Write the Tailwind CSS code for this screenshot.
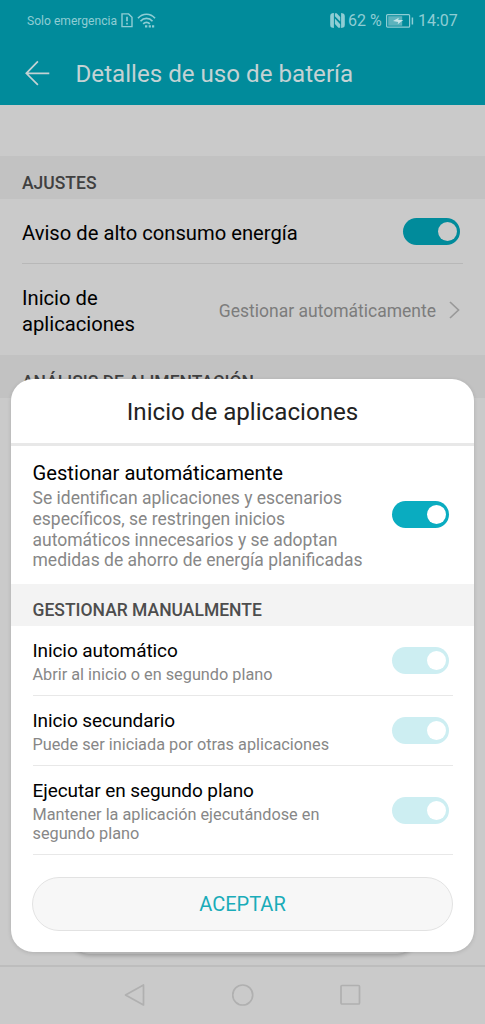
<!DOCTYPE html>
<html lang="es">
<head>
<meta charset="utf-8">
<title>Detalles de uso de batería</title>
<script src="https://cdn.jsdelivr.net/npm/@tailwindcss/browser@4"></script>
</head>
<body class="relative h-[1024px] w-[485px] overflow-hidden bg-[#cacaca] font-[Roboto,sans-serif] text-black">
<div class="flex h-full flex-col">
  <header class="h-[105px] bg-[#018b9b]">
    <div class="flex h-[41px] items-center justify-between pl-[27px] pr-[27px] text-[#8fcdd4]">
      <div class="flex items-center">
        <span class="w-[90px] whitespace-nowrap text-[12.1px] leading-4">Solo emergencia</span>
        <svg class="ml-[4px]" width="12" height="15" viewBox="0 0 12 15" fill="none" stroke="currentColor" stroke-width="1.4"><path d="M1 .9h6.6L11 4.3v9.3H1z"/><path d="M6 3.8v4.4M6 9.8v1.6" stroke-width="1.700"/></svg>
        <svg class="ml-[4px]" width="19" height="16" viewBox="0 0 19 16" fill="none" stroke="currentColor" stroke-width="1.7"><path d="M1 5.3c4.6-5.4 12.400-5.400 17 0M3.500 8.200c3.300-3.700 8.700-3.700 12 0M6.200 10.800c1.900-2 4.700-2 6.600 0"/><path d="M8 13.300h2.300M11.700 13.300h2.200M15 13.300h2.200" stroke-width="2.300"/></svg>
      </div>
      <div class="flex items-center">
        <svg width="15" height="15" viewBox="0 0 15 15"><path fill="currentColor" d="M2 .3 3.900 0v15L1.600 14.600Q.2 14 .2 12V3Q.2 1 2 .3zM11.100 0l2.200.4Q14.800 1 14.800 3v9q0 2-1.500 2.600l-2.200.4z"/><path fill="currentColor" d="M4.900.3h1.800L10.200 4v4.600L4.900 3.200zM4.900 5.600l5.300 5.600v3.500H8.400L4.900 11z"/></svg>
        <span class="ml-[3px] w-[34px] whitespace-nowrap text-[16px] leading-5">62 %</span>
        <svg class="ml-[4px]" width="28" height="14" viewBox="0 0 28 14"><rect x=".6" y=".6" width="23" height="12.600" rx="1" fill="none" stroke="currentColor" stroke-width="1.200"/><path d="M2.200 2.200h14v9.500h-14z" fill="#5cb3bd"/><path d="M26.400 3.500v7" stroke="currentColor" stroke-width="1.500"/><path d="M7 6.900 12.800 3.700 12.200 6H17.300L11.700 10.300 12.200 8z" fill="#c5e5e8"/></svg>
        <span class="ml-[4px] w-[40px] whitespace-nowrap text-[16px] leading-5">14:07</span>
      </div>
    </div>
    <div class="flex h-[64px] items-center pl-[25px] text-[#c4d2d4]">
      <svg class="-mt-px" width="25" height="26" viewBox="0 0 25 26" fill="none" stroke="currentColor" stroke-width="1.700"><path d="M24.300 13.300H1.300M12.900 1.300 1.300 13.300l11.600 11.600"/></svg>
      <h1 class="ml-[25.500px] whitespace-nowrap pt-[2px] text-[24.150px] leading-8">Detalles de uso de batería</h1>
    </div>
  </header>
  <main class="flex grow flex-col">
    <div class="h-[51px]"></div>
    <h2 class="flex h-[43px] items-center bg-[#c2c2c2] pl-[22px] pt-[11px] text-[17.500px] font-medium text-[#404040]">AJUSTES</h2>
    <div class="mx-[22px] flex h-[65px] items-center justify-between border-b border-[#b8b8b8]">
      <span class="whitespace-nowrap pt-[3px] text-[20.200px] leading-6">Aviso de alto consumo energía</span>
      <span class="mr-[3px] flex h-[27px] w-[57px] items-center justify-end rounded-full bg-[#018b9b] pr-[3px]"><i class="size-[19px] rounded-full bg-[#cacaca]"></i></span>
    </div>
    <div class="mx-[22px] flex h-[91px] items-center">
      <span class="grow pt-[2px] text-[20.200px] leading-[26px]">Inicio de<br>aplicaciones</span>
      <span class="whitespace-nowrap pt-[3px] text-[17.500px] text-[#7c7c7c]">Gestionar automáticamente</span>
      <svg class="ml-[13px] mr-[3px]" width="11" height="18" viewBox="0 0 11 18" fill="none" stroke="#999" stroke-width="1.700"><path d="M1 1l8.500 8L1 17"/></svg>
    </div>
    <h2 class="flex h-[43px] items-center bg-[#c2c2c2] pl-[22px] pt-[12px] text-[17.500px] font-medium text-[#404040]">ANÁLISIS DE ALIMENTACIÓN</h2>
    <div class="grow"></div>
    <div class="mx-auto h-[44px] w-[350px] -mb-[44px] -translate-y-[55px] rounded-[22px] border border-[#bebebe] bg-[#c4c4c4] shadow-[0_2px_4px_#0003]"></div>
  </main>
  <nav class="flex h-[59px] items-center justify-center gap-[86px] border-t-2 border-[#bdbdbd] bg-[#cacaca] pb-px text-[#b0b0b0]">
    <svg width="22" height="24" viewBox="0 0 22 24" fill="none" stroke="currentColor" stroke-width="1.700" stroke-linejoin="round"><path d="M19.500 2v20L1.500 12z"/></svg>
    <svg width="22" height="24" viewBox="0 0 22 24" fill="none" stroke="currentColor" stroke-width="1.700"><circle cx="10.700" cy="12" r="10"/></svg>
    <svg width="22" height="24" viewBox="0 0 22 24" fill="none" stroke="currentColor" stroke-width="1.700"><rect x="1" y="2.500" width="18.500" height="18.500" rx="1"/></svg>
  </nav>
</div>

<section class="absolute left-[11px] top-[379px] flex h-[573px] w-[463px] flex-col overflow-hidden rounded-[22px] bg-white shadow-[0_1px_4px_#0002]">
  <h2 class="flex h-[67px] items-center justify-center whitespace-nowrap border-b-[3px] border-[#e8e8e8] pt-[2px] text-[24.150px] text-[#222]">Inicio de aplicaciones</h2>
  <div class="flex h-[138px] items-center justify-between pl-[21.500px] pr-[25px]">
    <div class="whitespace-nowrap">
      <h3 class="text-[20.200px] leading-[26px]">Gestionar automáticamente</h3>
      <p class="-mb-px pt-[2px] text-[17.500px] leading-[20.700px] text-[#878787]">Se identifican aplicaciones y escenarios<br>específicos, se restringen inicios<br>automáticos innecesarios y se adoptan<br>medidas de ahorro de energía planificadas</p>
    </div>
    <span class="-mt-[2px] flex h-[27px] w-[57px] items-center justify-end rounded-full bg-[#0aacc0] pr-[3px]"><i class="size-[19px] rounded-full bg-white"></i></span>
  </div>
  <h2 class="flex h-[42px] items-center bg-[#f3f3f3] pl-[21.500px] pt-[11px] text-[17.500px] font-medium text-[#4d4d4d]">GESTIONAR MANUALMENTE</h2>
  <div class="mx-[21.500px] flex h-[70px] items-center justify-between border-b border-[#e8e8e8]">
    <div class="whitespace-nowrap pt-[2px]">
      <h3 class="text-[19px] leading-[26px] tracking-[-0.090px]">Inicio automático</h3>
      <p class="pt-px text-[16.270px] leading-[20px] text-[#878787]">Abrir al inicio o en segundo plano</p>
    </div>
    <span class="mr-[4px] flex h-[27px] w-[57px] items-center justify-end rounded-full bg-[#cdeef2] pr-[3px]"><i class="size-[19px] rounded-full bg-white"></i></span>
  </div>
  <div class="mx-[21.500px] flex h-[70px] items-center justify-between border-b border-[#e8e8e8]">
    <div class="whitespace-nowrap pt-[2px]">
      <h3 class="text-[19px] leading-[26px] tracking-[-0.090px]">Inicio secundario</h3>
      <p class="pt-px text-[16.270px] leading-[20px] text-[#878787]">Puede ser iniciada por otras aplicaciones</p>
    </div>
    <span class="mr-[4px] flex h-[27px] w-[57px] items-center justify-end rounded-full bg-[#cdeef2] pr-[3px]"><i class="size-[19px] rounded-full bg-white"></i></span>
  </div>
  <div class="mx-[21.500px] flex h-[89px] items-center justify-between border-b border-[#e8e8e8]">
    <div class="whitespace-nowrap">
      <h3 class="text-[19px] leading-[26px] tracking-[-0.090px]">Ejecutar en segundo plano</h3>
      <p class="pt-px text-[16.270px] leading-[19px] text-[#878787]">Mantener la aplicación ejecutándose en<br>segundo plano</p>
    </div>
    <span class="mr-[4px] flex h-[27px] w-[57px] items-center justify-end rounded-full bg-[#cdeef2] pr-[3px]"><i class="size-[19px] rounded-full bg-white"></i></span>
  </div>
  <button class="mx-[21px] mt-[22px] h-[54px] rounded-full border border-[#e2e2e2] bg-[#f7f7f7] text-[20px] text-[#1aacb9]">ACEPTAR</button>
</section>
</body>
</html>
